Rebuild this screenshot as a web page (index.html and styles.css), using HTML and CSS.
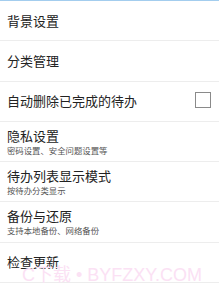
FILE: index.html
```html
<!DOCTYPE html>
<html lang="zh">
<head>
<meta charset="utf-8">
<link rel="stylesheet" href="styles.css">
</head>
<body>
<div class="page">
  <div class="list">
    <div class="row"><div class="title">背景设置</div></div>
    <div class="row"><div class="title">分类管理</div></div>
    <div class="row row-check">
      <div class="title">自动删除已完成的待办</div>
      <span class="checkbox"></span>
    </div>
    <div class="row">
      <div class="title">隐私设置</div>
      <div class="sub">密码设置、安全问题设置等</div>
    </div>
    <div class="row">
      <div class="title">待办列表显示模式</div>
      <div class="sub">按待办分类显示</div>
    </div>
    <div class="row">
      <div class="title">备份与还原</div>
      <div class="sub">支持本地备份、网络备份</div>
    </div>
    <div class="row"><div class="title">检查更新</div></div>
  </div>
  <div class="watermark">C下载 • BYFZXY.COM</div>
</div>
</body>
</html>
```
FILE: styles.css
```css
html, body {
  margin: 0;
  padding: 0;
  background: #ffffff;
}
.page {
  position: relative;
  width: 219px;
  height: 294px;
  overflow: hidden;
  border-top: 1px solid #a3cdee;
  box-sizing: border-box;
  font-family: "Noto Sans CJK SC", "Noto Sans", sans-serif;
}
.list {
  display: flex;
  flex-direction: column;
}
.row {
  height: 40.3px;
  box-sizing: border-box;
  border-bottom: 1px solid #ededed;
  padding: 0 7px;
  display: flex;
  flex-direction: column;
  justify-content: center;
}
.row-check {
  flex-direction: row;
  align-items: center;
  justify-content: space-between;
  padding-right: 8px;
}
.title {
  font-size: 13px;
  line-height: 16px;
  color: #222222;
}
.sub {
  font-size: 8.4px;
  line-height: 11px;
  color: #555555;
  margin-top: 1px;
}
.checkbox {
  width: 14px;
  height: 14px;
  border: 1.5px solid #8a8a8a;
  margin-top: -3px;
}
.watermark {
  position: absolute;
  left: 22px;
  top: 266px;
  font-family: "Liberation Sans", "Noto Sans CJK SC", sans-serif;
  font-size: 18px;
  line-height: 16px;
  color: #fbe1f4;
  white-space: nowrap;
}
```
